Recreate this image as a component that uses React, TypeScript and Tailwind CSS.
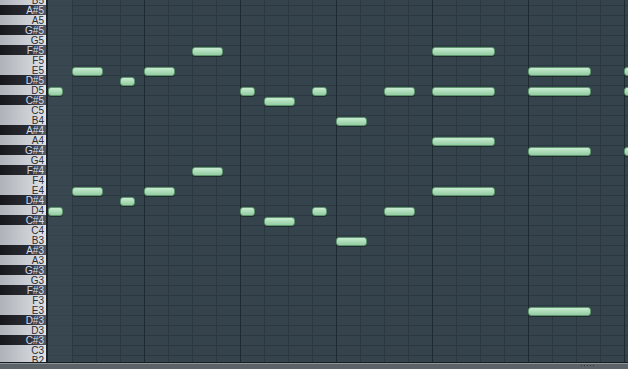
import React from "react";

const KEYS = [
  "B5", "A#5", "A5", "G#5", "G5", "F#5", "F5", "E5", "D#5", "D5", "C#5", "C5",
  "B4", "A#4", "A4", "G#4", "G4", "F#4", "F4", "E4", "D#4", "D4", "C#4", "C4",
  "B3", "A#3", "A3", "G#3", "G3", "F#3", "F3", "E3", "D#3", "D3", "C#3", "C3",
  "B2",
];

// [x in grid px, length in px, row index from top]
const NOTES: [number, number, number][] = [
  [0, 16, 9], [24, 32, 7], [72, 16, 8], [96, 32, 7], [144, 32, 5],
  [192, 16, 9], [216, 32, 10], [264, 16, 9], [288, 32, 12], [336, 32, 9],
  [384, 64, 5], [384, 64, 9], [384, 64, 14], [384, 64, 19],
  [480, 64, 7], [480, 64, 9], [480, 64, 15], [480, 64, 31],
  [576, 16, 7], [576, 16, 9], [576, 16, 15],
  // octave below
  [0, 16, 21], [24, 32, 19], [72, 16, 20], [96, 32, 19], [144, 32, 17],
  [192, 16, 21], [216, 32, 22], [264, 16, 21], [288, 32, 24], [336, 32, 21],
];

const COLS = Array.from({ length: 25 }, (_, i) => i);

function Keyboard() {
  return (
    <div className="w-[46px] shrink-0 overflow-hidden">
      <div className="-mt-[5px] flex flex-col">
        {KEYS.map((k) => {
          const black = k.includes("#");
          return (
            <div
              key={k}
              className={
                black
                  ? "h-[10px] shrink-0 flex items-center justify-end pr-[2px] bg-gradient-to-r from-[#17181c] via-[#2a2c33] via-60% to-[#5a5d67] text-[#d4dbea]"
                  : "h-[10px] shrink-0 flex items-center justify-end pr-[2px] bg-gradient-to-r from-[#aeb2b9] to-[#e0e2e6] text-[#2b2e34]"
              }
            >
              <span className="mt-[1px] text-[10px] leading-[10px] font-['Liberation_Sans',sans-serif]">{k}</span>
            </div>
          );
        })}
      </div>
    </div>
  );
}

function Grid() {
  return (
    <div className="relative flex-1 overflow-hidden bg-[#34434c]">
      {/* row lines */}
      <div className="-mt-[5px] flex flex-col">
        {KEYS.map((k) => (
          <div key={k} className="h-[10px] shrink-0 border-t border-[#2b3840]" />
        ))}
      </div>
      {/* beat / bar lines */}
      <div className="absolute inset-0 flex">
        {COLS.map((c) => (
          <div
            key={c}
            className={
              c === 0
                ? "w-[24px] shrink-0 bg-[#3a4952]/70"
                : c % 4 === 0
                ? "w-[24px] shrink-0 border-l border-[#1f2a30]"
                : "w-[24px] shrink-0 border-l border-[#2b3840]"
            }
          />
        ))}
      </div>
      {/* notes */}
      {NOTES.map(([x, len, row], i) => (
        <div
          key={i}
          className="absolute h-[9px] rounded-[3px] border border-[#5e946d] bg-gradient-to-b from-[#c8edd2] via-[#addcb9] to-[#94cca3] shadow-[0_1px_0_rgba(20,30,25,0.6)]"
          style={{ left: x, top: -5 + row * 10 + 2, width: len - 1 }}
        />
      ))}
    </div>
  );
}

export default function App() {
  return (
    <div className="w-[628px] h-[369px] overflow-hidden flex flex-col bg-[#34434c]">
      <div className="h-[362px] shrink-0 flex">
        <Keyboard />
        <div className="w-[2px] shrink-0 bg-[#1a2227]" />
        <Grid />
      </div>
      <div className="h-[1px] shrink-0 bg-[#161c20]" />
      <div className="relative h-[6px] shrink-0 bg-[#5b6368] border-t border-[#8d969b]">
        <div className="absolute right-[34px] top-[1px] flex gap-[2px]">
          {[0, 1, 2, 3, 4].map((d) => (
            <div key={d} className="w-[1px] h-[1px] bg-[#2e3437]" />
          ))}
        </div>
      </div>
    </div>
  );
}
